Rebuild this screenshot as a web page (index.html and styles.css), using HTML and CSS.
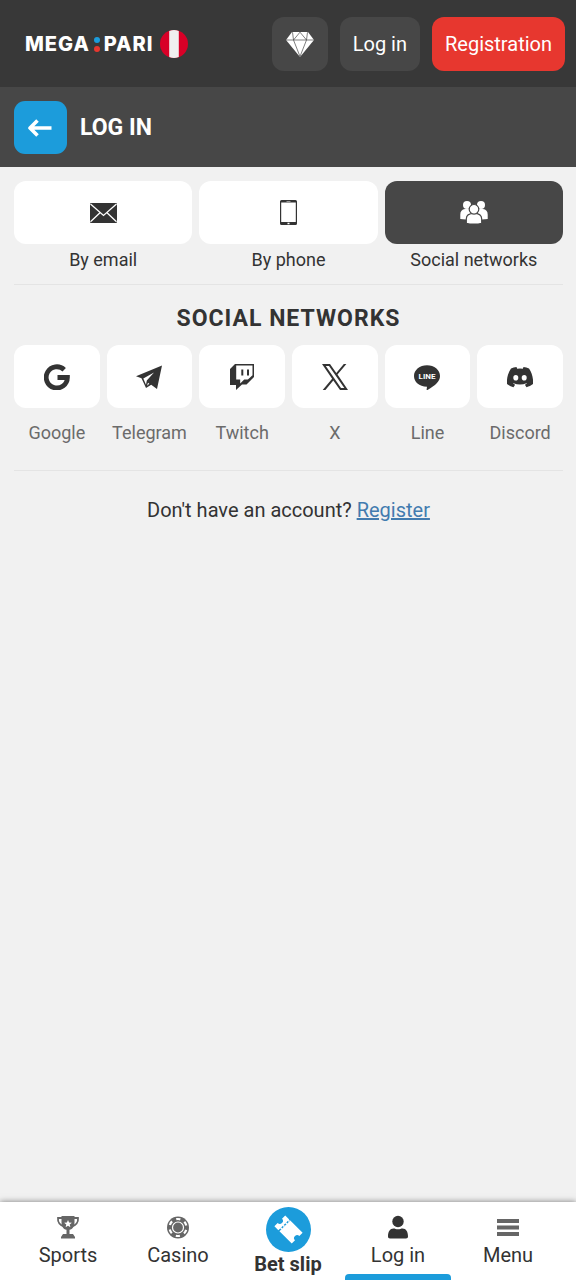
FILE: index.html
```html
<!DOCTYPE html>
<html lang="en">
<head>
<meta charset="utf-8">
<meta name="viewport" content="width=device-width, initial-scale=1">
<title>Log in</title>
<link rel="stylesheet" href="styles.css">
</head>
<body>
<div class="page">
  <header class="header">
    <a class="logo" href="#">
      <span class="logo-text">MEGA</span>
      <svg class="logo-dots" viewBox="0 0 6 15"><circle cx="3" cy="3" r="3" fill="#1c9cdb"/><circle cx="3" cy="12" r="3" fill="#e7372f"/></svg>
      <span class="logo-text">PARI</span>
      <svg class="logo-flag" viewBox="0 0 28 28"><circle cx="14" cy="14" r="14" fill="#d80027"/><path fill="#f0f0f0" d="M9.2 .9a14 14 0 0 1 9.6 0v26.200a14 14 0 0 1-9.600 0z"/></svg>
    </a>
    <div class="header-actions">
      <button class="btn btn-icon" type="button" aria-label="Bonuses">
        <svg class="gem" viewBox="0 0 28 25"><path fill="#fff" d="M6 0h16l6 8-14 17L0 8z"/><path fill="none" stroke="#474747" stroke-width=".7" d="M0 8h28M14 .2L7.500 8 14 24.500 20.500 8zM6.500.2l1 7.800M21.500.2l-1 7.800"/></svg>
      </button>
      <button class="btn" type="button">Log in</button>
      <button class="btn btn-primary" type="button">Registration</button>
    </div>
  </header>

  <div class="title-bar">
    <button class="back" type="button" aria-label="Back">
      <svg class="back-icon" viewBox="0 0 24 18"><path fill="none" stroke="#fff" stroke-width="3.600" stroke-linejoin="round" d="M9.500 1.500L2 9l7.500 7.500M2.500 9h21"/></svg>
    </button>
    <h1 class="title">LOG IN</h1>
  </div>

  <main class="content">
    <div class="methods">
      <button class="method" type="button">
        <span class="tile"><svg class="icon-mail" viewBox="0 0 27 20"><rect width="27" height="20" rx="1" fill="#333"/><path fill="none" stroke="#fff" stroke-width="1.300" d="M.5 1l13 11.500L26.500 1M.5 18.800l9.500-9M26.500 18.800l-9.500-9"/></svg></span>
        <span class="method-label">By email</span>
      </button>
      <button class="method" type="button">
        <span class="tile"><svg class="icon-phone" viewBox="0 0 17 25"><path fill="#333" fill-rule="evenodd" d="M1.500 0h14A1.500 1.500 0 0 1 17 1.500v22a1.500 1.500 0 0 1-1.500 1.500h-14A1.500 1.500 0 0 1 0 23.500v-22A1.500 1.500 0 0 1 1.500 0zM1.200 2.500v19.500h14.600V2.500z"/><path fill="#fff" d="M6.500 1h4v.6h-4zM7.500 22.700h2v1.500h-2z"/></svg></span>
        <span class="method-label">By phone</span>
      </button>
      <button class="method method-active" type="button" aria-pressed="true">
        <span class="tile"><svg class="icon-people" viewBox="0 0 28 23"><g fill="#fff"><circle cx="7" cy="4" r="4"/><circle cx="21" cy="4" r="4"/><path d="M.3 18v-4.500c0-3.500 1.700-5 4.700-5.500h4c2 .3 3.500 1.500 3.500 4v6c-4 .6-9 .6-12.200 0zM27.700 18v-4.500c0-3.500-1.700-5-4.700-5.500h-4c-2 .3-3.500 1.500-3.500 4v6c4 .6 9 .6 12.200 0z"/></g><g fill="#fff" stroke="#474747" stroke-width="1.200"><path d="M6.300 22.300v-4.300c0-4 2.500-5.700 7.700-5.700s7.700 1.700 7.700 5.700v4.300c-4 1.200-11.400 1.200-15.400 0z"/><circle cx="14" cy="8.300" r="4.800"/></g></svg></span>
        <span class="method-label">Social networks</span>
      </button>
    </div>

    <h2 class="heading">SOCIAL NETWORKS</h2>
    <div class="socials">
      <a class="social" href="#">
        <span class="tile"><svg class="icon-social" viewBox="0 0 26 26"><path fill="none" stroke="#333" stroke-width="4.800" d="M20.200 5.800A10.600 10.600 0 1 0 23.400 13.500H13.500"/></svg></span>
        <span class="social-label">Google</span>
      </a>
      <a class="social" href="#">
        <span class="tile"><svg class="icon-social" viewBox="0 0 26 26"><path fill="#333" d="M26 1.500L21 25l-5.800-4.300L10 24 5.500 14.200 0 12.300z"/><path fill="#fff" d="M18 8.500L7.300 14.500l2.700 6.200.8-4.200zM12 18.800l-1 3 2.300-2z"/></svg></span>
        <span class="social-label">Telegram</span>
      </a>
      <a class="social" href="#">
        <span class="tile"><svg class="icon-social" viewBox="0 0 26 26"><path fill="#333" fill-rule="evenodd" d="M6 0h19v13l-7.500 7.500h-4.500L7 26v-5H1V5zM7.200 1.500v14h4v4l4-4h3.700l4.600-4.300V1.500z"/><path fill="#333" d="M12.300 5.500h2v6h-2zM18 5.500h2v6h-2z"/></svg></span>
        <span class="social-label">Twitch</span>
      </a>
      <a class="social" href="#">
        <span class="tile"><svg class="icon-social" viewBox="0 0 26 26"><path fill="#333" fill-rule="evenodd" d="M0 0h8l6.300 8.900L21.800 0h2.600L15.500 10.600 26 26h-8l-6.700-9.600L3.400 26H.7l9.400-11.300zM3.800 1.900L19 24h3.300L7 1.900z"/></svg></span>
        <span class="social-label">X</span>
      </a>
      <a class="social" href="#">
        <span class="tile"><svg class="icon-social" viewBox="0 0 26 26"><path fill="#333" d="M13 1.200c7.200 0 13 4.700 13 10.700 0 5.200-4.500 9.300-12.500 14.100-.8.400-1-.1-.8-1l.3-2.300C5 22.200 0 17.800 0 11.900 0 5.900 5.800 1.200 13 1.200z"/><text class="line-word" x="13" y="15" text-anchor="middle">LINE</text></svg></span>
        <span class="social-label">Line</span>
      </a>
      <a class="social" href="#">
        <span class="tile"><svg class="icon-social" viewBox="0 0 26 26"><path fill="#333" fill-rule="evenodd" d="M9.500 3l.7 1.700a21 21 0 0 1 5.600 0L16.500 3c2 .3 3.700.8 5.500 1.600 3 4.400 4.500 10 4 15.400-2 1.500-4 2.500-6.500 3.200l-1.600-2.500 2.100-1.100-.4-.4a17 17 0 0 1-13.200 0l-.4.400 2.100 1.100-1.600 2.500C4 22.500 2 21.500 0 20-.5 14.500 1 9 4 4.600 5.800 3.800 7.500 3.300 9.500 3zM8.800 11a2.500 2.800 0 1 0 0 5.600 2.500 2.800 0 1 0 0-5.600zM17.200 11a2.500 2.800 0 1 0 0 5.600 2.500 2.800 0 1 0 0-5.600z"/></svg></span>
        <span class="social-label">Discord</span>
      </a>
    </div>
    <p class="register">Don't have an account? <a class="register-link" href="#">Register</a></p>
  </main>

  <nav class="nav">
    <a class="nav-item" href="#">
      <svg class="nav-icon" viewBox="0 0 24 24"><path fill="none" stroke="#666" stroke-width="1.800" d="M6 3H2C1.500 7 4 10.500 8.500 11.500M18 3h4c.5 4-2 7.500-6.500 8.500"/><path fill="#666" d="M5.500 1h13v6c0 4.500-1.800 7-5 7.800V19H17l2 3v1.500H5V22l2-3h3.500v-4.200c-3.200-.8-5-3.300-5-7.800z"/><path fill="#fff" d="M12 5l1.100 2.600 2.800.2-2.200 1.800.7 2.700L12 10.800l-2.400 1.500.7-2.700L8.100 7.800l2.800-.2z"/></svg>
      <span>Sports</span>
    </a>
    <a class="nav-item" href="#">
      <svg class="nav-icon" viewBox="0 0 24 24"><circle cx="12" cy="12.500" r="11" fill="#666"/><circle cx="12" cy="12.500" r="8.500" fill="none" stroke="#fff" stroke-width="2.200" stroke-dasharray="4.200 4.700" stroke-dashoffset="-2.400"/><circle cx="12" cy="12.500" r="5.500" fill="#666" stroke="#fff" stroke-width="1.200"/></svg>
      <span>Casino</span>
    </a>
    <a class="nav-item nav-slip" href="#">
      <svg class="slip-icon" viewBox="0 0 44 44"><circle cx="22" cy="22" r="22" fill="#1c9cdb"/><g transform="translate(22 22) rotate(45)"><path fill="#fff" d="M-12-7.500h5.500v15H-12V3a3 3 0 0 0 0-6zM-5-7.500H12V-3a3 3 0 0 0 0 6v4.500H-5z"/><path stroke="#fff" stroke-width="1.700" stroke-dasharray="1.500 2" d="M-5.800-7v14"/></g></svg>
      <span>Bet slip</span>
    </a>
    <a class="nav-item nav-active" href="#" aria-current="page">
      <svg class="nav-icon" viewBox="0 0 24 24"><circle cx="12" cy="6.500" r="5.700" fill="#333"/><path fill="#333" d="M2 21.500c0-5 2-8 5.500-8 1.500 0 2.500.8 4.500.8s3-.8 4.500-.8c3.500 0 5.500 3 5.500 8 0 1.300-.7 2-2 2H4c-1.300 0-2-.7-2-2z"/></svg>
      <span>Log in</span>
    </a>
    <a class="nav-item" href="#">
      <svg class="nav-icon" viewBox="0 0 24 24"><path fill="#666" d="M1 4h22v4H1zM1 10.500h22v4H1zM1 17h22v4H1z"/></svg>
      <span>Menu</span>
    </a>
  </nav>
</div>
</body>
</html>
```
FILE: styles.css
```css
* { box-sizing: border-box; }
body {
  margin: 0;
  background: #f1f1f1;
  color: #333;
  font-family: Roboto, "Liberation Sans", sans-serif;
  font-size: 20px;
  line-height: 24px;
}
button {
  margin: 0;
  padding: 0;
  border: 0;
  background: none;
  color: inherit;
  font: inherit;
  cursor: pointer;
}
a { color: inherit; text-decoration: none; }
svg { display: block; flex: none; }

.page { display: flex; flex-direction: column; min-height: 100vh; }

.header {
  display: flex;
  align-items: center;
  justify-content: space-between;
  padding: 17px 11px 16px 25px;
  background: #383838;
}
.logo { display: flex; align-items: center; gap: 4px; color: #fff; }
.logo-text { font: 800 20px/24px Inter, sans-serif; letter-spacing: 1px; }
.logo-dots { width: 6px; height: 15px; }
.logo-flag { width: 28px; height: 28px; margin-left: 3px; }
.header-actions { display: flex; gap: 12px; }
.btn {
  display: flex;
  align-items: center;
  height: 54px;
  padding: 0 13px;
  border-radius: 12px;
  background: #474747;
  color: #fff;
}
.btn-icon { padding: 0 14px; }
.btn-primary { background: #e7372f; }
.gem { width: 28px; height: 25px; }

.title-bar {
  display: flex;
  align-items: center;
  gap: 13px;
  padding: 14px 14px 13px;
  background: #474747;
}
.back {
  display: flex;
  align-items: center;
  justify-content: center;
  width: 53px;
  height: 53px;
  border-radius: 11px;
  background: #1c9cdb;
}
.back-icon { width: 24px; height: 18px; margin-right: 2px; }
.title { margin: 0; color: #fff; font-size: 23px; line-height: 28px; font-weight: 700; }

.content { flex: 1; padding: 14px 13px 24px 14px; }
.methods {
  display: grid;
  grid-template-columns: repeat(3, 1fr);
  gap: 7px;
  padding-bottom: 12px;
  border-bottom: 1px solid #e4e4e4;
}
.method { display: flex; flex-direction: column; gap: 4px; }
.tile {
  display: flex;
  align-items: center;
  justify-content: center;
  width: 100%;
  height: 63px;
  border-radius: 12px;
  background: #fff;
}
.method-active .tile { background: #474747; }
.method-label { width: 100%; font-size: 18px; text-align: center; }
.icon-mail { width: 27px; height: 20px; }
.icon-phone { width: 17px; height: 25px; }
.icon-people { width: 28px; height: 23px; }

.heading {
  margin: 20px 0 12px;
  font-size: 23px;
  line-height: 28px;
  font-weight: 700;
  letter-spacing: 1px;
  text-align: center;
}
.socials {
  display: grid;
  grid-template-columns: repeat(6, 1fr);
  gap: 7px;
  padding-bottom: 25px;
  border-bottom: 1px solid #e4e4e4;
}
.social { display: flex; flex-direction: column; align-items: center; gap: 13px; min-width: 0; }
.social-label { color: #6b6b6b; font-size: 18px; }
.icon-social { width: 26px; height: 26px; }
.line-word { fill: #fff; font: 700 8px Roboto, sans-serif; }
.register { margin: 27px 0 0; text-align: center; }
.register-link { color: #427baf; text-decoration: underline; }

.nav {
  position: sticky;
  bottom: 0;
  display: grid;
  grid-template-columns: repeat(5, 1fr);
  gap: 4px;
  height: 78px;
  padding: 0 15px;
  background: #fff;
  box-shadow: 0 0 6px rgba(0, 0, 0, 0.5);
}
.nav-item {
  display: flex;
  flex-direction: column;
  align-items: center;
  gap: 4px;
  padding-top: 13px;
}
.nav-icon { width: 24px; height: 24px; }
.nav-slip { gap: 0; padding-top: 5px; font-weight: 700; }
.slip-icon { width: 45px; height: 45px; }
.nav-active { position: relative; }
.nav-active::after {
  content: "";
  position: absolute;
  right: 0;
  bottom: 0;
  left: 0;
  height: 6px;
  border-radius: 4px 4px 0 0;
  background: #1c9cdb;
}
```
